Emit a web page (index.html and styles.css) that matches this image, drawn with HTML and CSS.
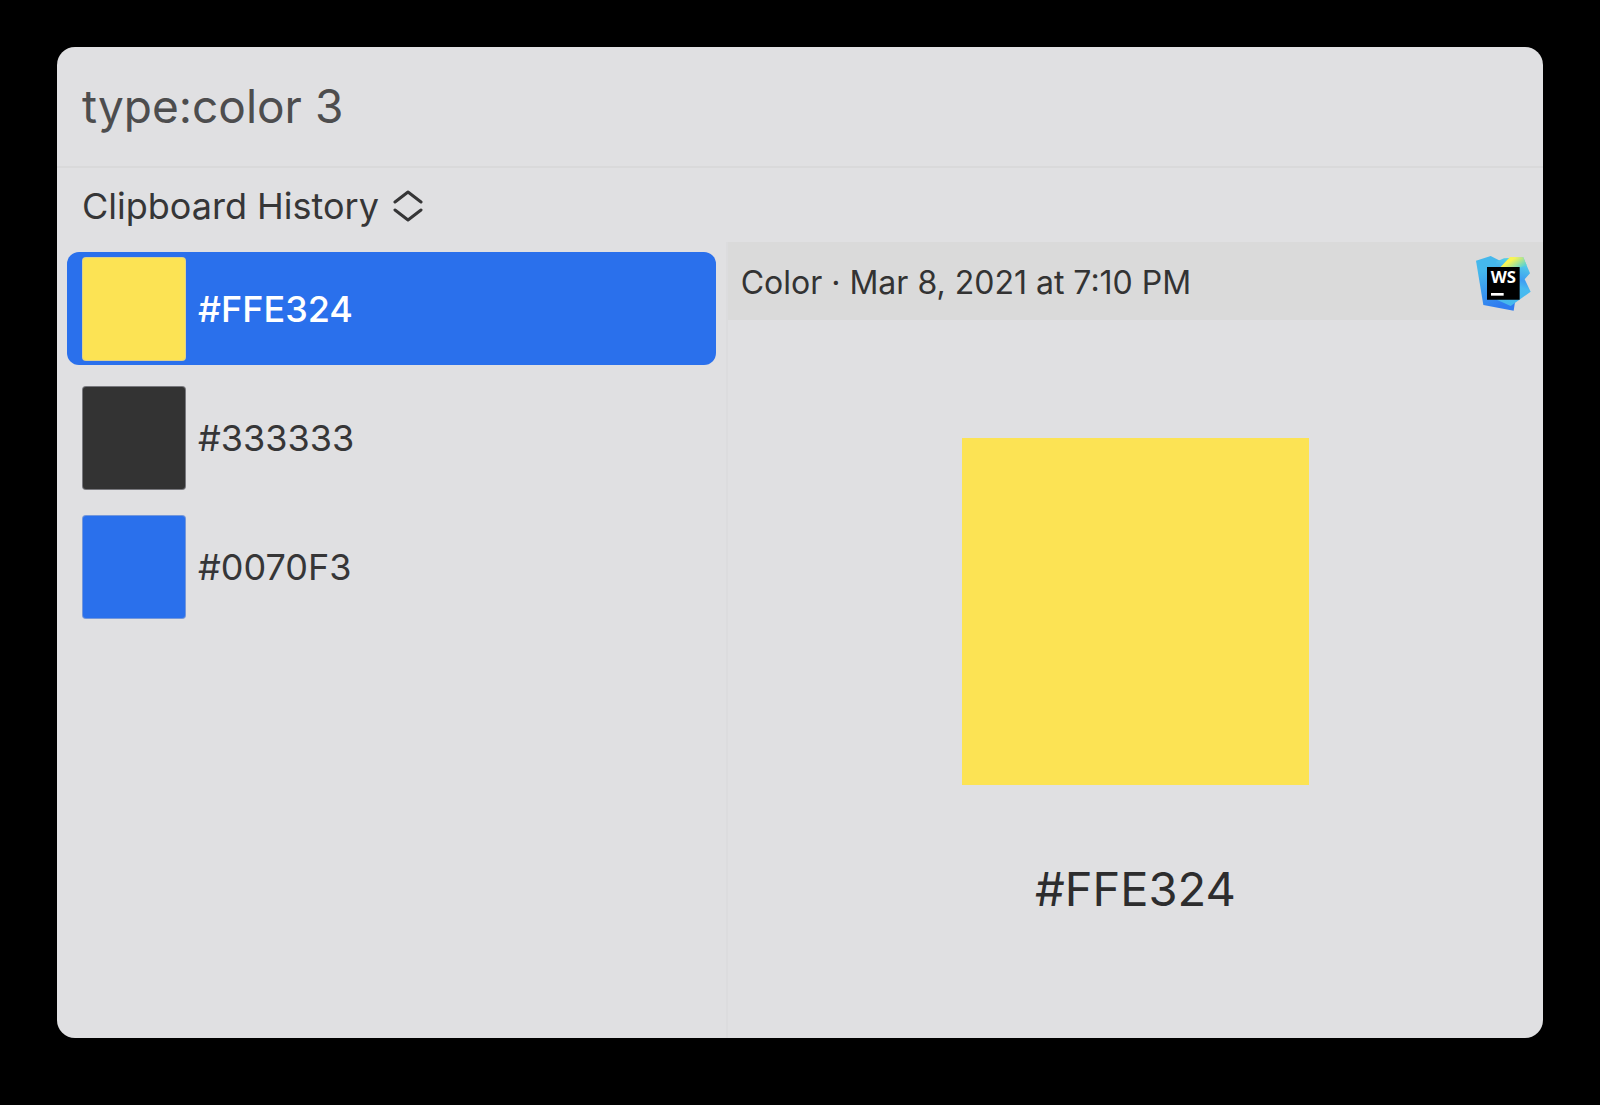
FILE: index.html
```html
<!DOCTYPE html>
<html lang="en">
<head>
<meta charset="utf-8">
<meta name="viewport" content="width=device-width, initial-scale=1">
<title>Clipboard History</title>
<link rel="stylesheet" href="styles.css">
</head>
<body>
<main class="window">
  <form class="search">
    <input class="search-input" type="text" value="type:color 3" aria-label="Search clipboard" spellcheck="false" autocomplete="off">
  </form>
  <div class="source">
    <select class="source-select" id="source" aria-label="Source">
      <option>Clipboard History</option>
    </select>
    <svg class="source-icon" viewBox="0 0 30 34" aria-hidden="true">
      <path d="M2 13 15 3l13 10M2 21l13 10 13-10"/>
    </svg>
  </div>
  <div class="panes">
    <ul class="list">
      <li><button class="item item-selected" type="button"><span class="swatch swatch-yellow"></span>#FFE324</button></li>
      <li><button class="item" type="button"><span class="swatch swatch-dark"></span>#333333</button></li>
      <li><button class="item" type="button"><span class="swatch swatch-blue"></span>#0070F3</button></li>
    </ul>
    <section class="preview">
      <header class="preview-header">
        <p class="preview-meta">Color · Mar 8, 2021 at 7:10 PM</p>
        <svg class="app-icon" viewBox="48 42 168 168" role="img" aria-label="WebStorm">
          <defs>
            <linearGradient id="left" x1="0" y1="0" x2="0.3" y2="1">
              <stop offset="0.3" stop-color="#45b8ec"/>
              <stop offset="1" stop-color="#2f7bf0"/>
            </linearGradient>
            <linearGradient id="right" x1="0.7" y1="0" x2="0.5" y2="1">
              <stop offset="0.1" stop-color="#56cfe6"/>
              <stop offset="0.45" stop-color="#3d9df2"/>
              <stop offset="0.6" stop-color="#48baf0"/>
              <stop offset="1" stop-color="#45b8ec"/>
            </linearGradient>
            <linearGradient id="beam" x1="0" y1="0" x2="1" y2="0.6">
              <stop offset="0.45" stop-color="#f8f454"/>
              <stop offset="1" stop-color="#5fd3cf"/>
            </linearGradient>
          </defs>
          <path fill="url(#left)" d="M48 59 92 45l28 14 30 60 16 58-5 32-91-17z"/>
          <path fill="url(#right)" d="m108 62 24-10 58-3 20 48-16 18 18 37-60 43-40-18z"/>
          <path fill="url(#beam)" d="m118 82 32-34 40 1 10 24-24 8z"/>
          <path d="M81 78h98v98H81z"/>
          <text class="app-initials" x="92" y="126">WS</text>
          <path fill="#fff" d="M93 156h38v8H93z"/>
        </svg>
      </header>
      <div class="preview-body">
        <div class="preview-color"></div>
        <p class="preview-value">#FFE324</p>
      </div>
    </section>
  </div>
</main>
</body>
</html>
```
FILE: styles.css
```css
* {
  box-sizing: border-box;
}

body {
  display: flex;
  min-height: 100vh;
  margin: 0;
  padding: 47px 57px 67px;
  background: #000;
  color: #333;
  font-family: Inter, "Liberation Sans", sans-serif;
}

p,
ul {
  margin: 0;
  padding: 0;
}

.window {
  display: flex;
  flex: 1;
  flex-direction: column;
  overflow: hidden;
  border-radius: 18px;
  background: #e0e0e2;
}

.search {
  padding: 28px 25px 29px;
  border-bottom: 2px solid #d9d9da;
}

.search-input {
  display: block;
  width: 100%;
  height: 62px;
  padding: 0;
  border: 0;
  outline: 0;
  background: none;
  color: #4d4d4e;
  font: inherit;
  font-size: 46px;
}

.source {
  display: flex;
  align-items: center;
  gap: 14px;
  height: 74px;
  padding: 2px 25px 0;
}

.source-select {
  appearance: none;
  padding: 0;
  border: 0;
  outline: 0;
  background: none;
  color: #363637;
  font: inherit;
  font-size: 36px;
}

.source-icon {
  width: 30px;
  height: 34px;
  fill: none;
  stroke: #363637;
  stroke-width: 3;
  stroke-linecap: round;
  stroke-linejoin: round;
}

.panes {
  display: grid;
  flex: 1;
  grid-template-columns: 45fr 55fr;
}

.list {
  display: flex;
  flex-direction: column;
  gap: 16px;
  padding: 10px;
  list-style: none;
}

.item {
  display: flex;
  align-items: center;
  gap: 12px;
  width: 100%;
  height: 113px;
  padding: 0 15px;
  border: 0;
  border-radius: 12px;
  background: none;
  color: #363637;
  font: inherit;
  font-size: 36px;
}

.item-selected {
  background: #2a70ec;
  color: #fff;
  font-weight: 500;
}

.swatch {
  width: 104px;
  height: 104px;
  border: 1px solid rgb(190 190 200 / 50%);
  border-radius: 4px;
}

.swatch-yellow {
  background: #fce354;
}

.swatch-dark {
  background: #333;
}

.swatch-blue {
  background: #2a70ec;
}

.preview {
  display: flex;
  flex-direction: column;
  border-left: 2px solid #dcdcde;
}

.preview-header {
  display: flex;
  align-items: center;
  justify-content: space-between;
  height: 78px;
  padding: 3px 11px 0 13px;
  background: #dadada;
}

.preview-meta {
  font-size: 32px;
}

.app-icon {
  width: 56px;
  height: 56px;
}

.app-initials {
  fill: #fff;
  font-family: "Open Sans", sans-serif;
  font-size: 50px;
  font-weight: 700;
}

.preview-body {
  display: flex;
  flex: 1;
  flex-direction: column;
  align-items: center;
  justify-content: center;
  gap: 72px;
}

.preview-color {
  width: 347px;
  height: 347px;
  background: #fce354;
}

.preview-value {
  color: #2d2d2e;
  font-size: 47px;
  line-height: 64px;
}
```
